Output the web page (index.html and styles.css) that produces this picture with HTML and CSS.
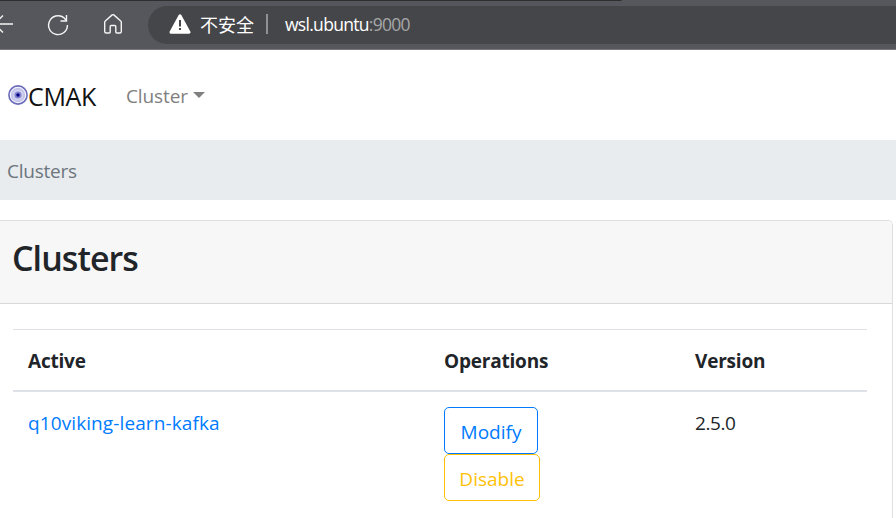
FILE: index.html
```
<!DOCTYPE html>
<html lang="en">
<head>
<meta charset="utf-8">
<title>CMAK</title>
<link rel="stylesheet" href="styles.css">
</head>
<body>
<header class="browser">
  <svg class="back" width="14" height="20" viewBox="0 0 14 20"><path d="M13 10H-6M3 1.5L-5.5 10L3 18.5"/></svg>
  <svg class="reload" width="22" height="22" viewBox="0 0 22 22"><path d="M18.7 5.8A9.4 9.4 0 1 0 20.4 11M19.5 1v6h-6"/></svg>
  <svg class="home" width="20" height="22" viewBox="0 0 20 22"><path d="M1.7 9.2Q1.7 8.5 2.3 8L9.2 1.9Q10 1.3 10.8 1.9L17.7 8Q18.3 8.5 18.3 9.2V18.5Q18.3 20 16.8 20H13.8Q12.8 20 12.8 19V13.5Q12.8 12.5 11.8 12.5H8.2Q7.2 12.5 7.2 13.5V19Q7.2 20 6.2 20H3.2Q1.7 20 1.7 18.5Z"/></svg>
  <div class="address">
    <svg class="warning" width="22" height="20" viewBox="0 0 22 20"><path class="triangle" d="M11 1.8L20 18.2H2Z"/><path class="mark" d="M11 6v6.5M11 14v2"/></svg>
    <span class="unsafe">不安全</span>
    <span class="divider"></span>
    <span class="url">wsl.ubuntu<span class="port">:9000</span></span>
  </div>
</header>
<nav class="navbar">
  <svg class="logo" width="20" height="20" viewBox="0 0 20 20"><circle cx="10" cy="10" r="9.1" fill="#f4f4fc" stroke="#6b6bbb" stroke-width="1.6"/><circle cx="10" cy="10" r="7.2" fill="#c4c4e9"/><circle cx="10" cy="10" r="5.2" fill="#d3d3f2"/><circle cx="10" cy="10" r="3.6" fill="#8585cf"/><circle cx="10" cy="10" r="1.7" fill="#000080"/></svg>
  <span class="brand">CMAK</span>
  <span class="menu">Cluster</span><span class="caret"></span>
</nav>
<div class="breadcrumb"><span>Clusters</span></div>
<main class="card">
  <div class="card-header"><h1>Clusters</h1></div>
  <table>
    <thead><tr><th class="active">Active</th><th class="operations">Operations</th><th>Version</th></tr></thead>
    <tbody><tr>
      <td><a class="cluster-link">q10viking-learn-kafka</a></td>
      <td><div class="buttons"><button class="modify">Modify</button><button class="disable">Disable</button></div></td>
      <td><span class="version">2.5.0</span></td>
    </tr></tbody>
  </table>
</main>
</body>
</html>
```

FILE: styles.css
```
* { box-sizing: border-box; }
body {
  margin: 0;
  height: 518px;
  overflow: hidden;
  background: #fff;
  color: #212529;
  font: 19px/30px "Open Sans", "Noto Sans", sans-serif;
}
svg { flex: none; fill: none; stroke: #f5f5f5; stroke-width: 1.4; }
.browser {
  display: flex;
  align-items: center;
  height: 50px;
  background: linear-gradient(90deg, #2e2e31 621px, #56575c 622px) 0 0 / 100% 1px no-repeat, #56575c;
  border-bottom: 1px solid #79797d;
}
.back { margin-bottom: 1px; }
.reload { margin-left: 33px; }
.home { margin: 0 0 1px 34px; }
.address {
  display: flex;
  align-items: center;
  flex: 1;
  height: 38px;
  margin-left: 25px;
  padding: 0 0 2px 21px;
  background: #454649;
  border-radius: 19px 0 0 19px;
  color: #fff;
  font-size: 18px;
}
.triangle { fill: #fff; stroke: #fff; stroke-width: 3; stroke-linejoin: round; }
.mark { stroke: #454649; stroke-width: 2; }
.unsafe { width: 54px; margin-left: 9px; font-family: "Noto Sans CJK SC", sans-serif; white-space: nowrap; }
.divider { width: 2px; height: 20px; margin: 0 17px 0 12px; background: #909194; }
.url { font-size: 17.5px; letter-spacing: -.7px; }
.port { color: #a5a6a8; }
.navbar { display: flex; align-items: center; height: 90px; padding-left: 8px; }
.logo { stroke: none; }
.brand { width: 98px; padding-top: 1px; font-size: 25px; color: #111; letter-spacing: -.35px; }
.menu { padding-top: 2px; color: #808080; letter-spacing: -.1px; }
.caret { margin: 0 0 1px 5px; border: 6px solid transparent; border-top-color: #808080; border-bottom: 0; }
.breadcrumb { height: 60px; padding: 16px 7px; background: #e9ecef; color: #6c757d; letter-spacing: -.25px; }
.card {
  width: 893px;
  height: 298px;
  margin-top: 20px;
  border: 1px solid #dfdfdf;
  border-left: 0;
  border-bottom: 0;
  border-radius: 0 5px 0 0;
}
.card-header { height: 83px; padding: 15px 12px; background: #f7f7f7; border-bottom: 1px solid #d8d8d8; border-radius: 0 4px 0 0; }
h1 { margin: 0; font-size: 34px; line-height: 45px; font-weight: 600; letter-spacing: -.95px; }
table { width: 854px; margin: 25px 0 0 13px; border-collapse: separate; border-spacing: 0; table-layout: fixed; }
th { height: 63px; padding: 1px 15px 0; border-top: 1px solid #dee2e6; border-bottom: 2px solid #dee2e6; text-align: left; font-weight: 700; letter-spacing: -.2px; }
.active { width: 416px; }
.operations { width: 251px; }
td { padding: 15px 15px 0; vertical-align: top; }
td > a, .version { display: block; padding-top: 1px; }
.version { letter-spacing: -.4px; }
.cluster-link { color: #007bff; letter-spacing: .1px; }
.buttons { display: flex; flex-direction: column; align-items: flex-start; }
button { height: 47px; padding: 2px 0 0; border: 1px solid; border-radius: 5px; background: #fff; font: inherit; text-align: center; }
.modify { width: 94px; color: #007bff; }
.disable { width: 96px; color: #ffc107; }
```
